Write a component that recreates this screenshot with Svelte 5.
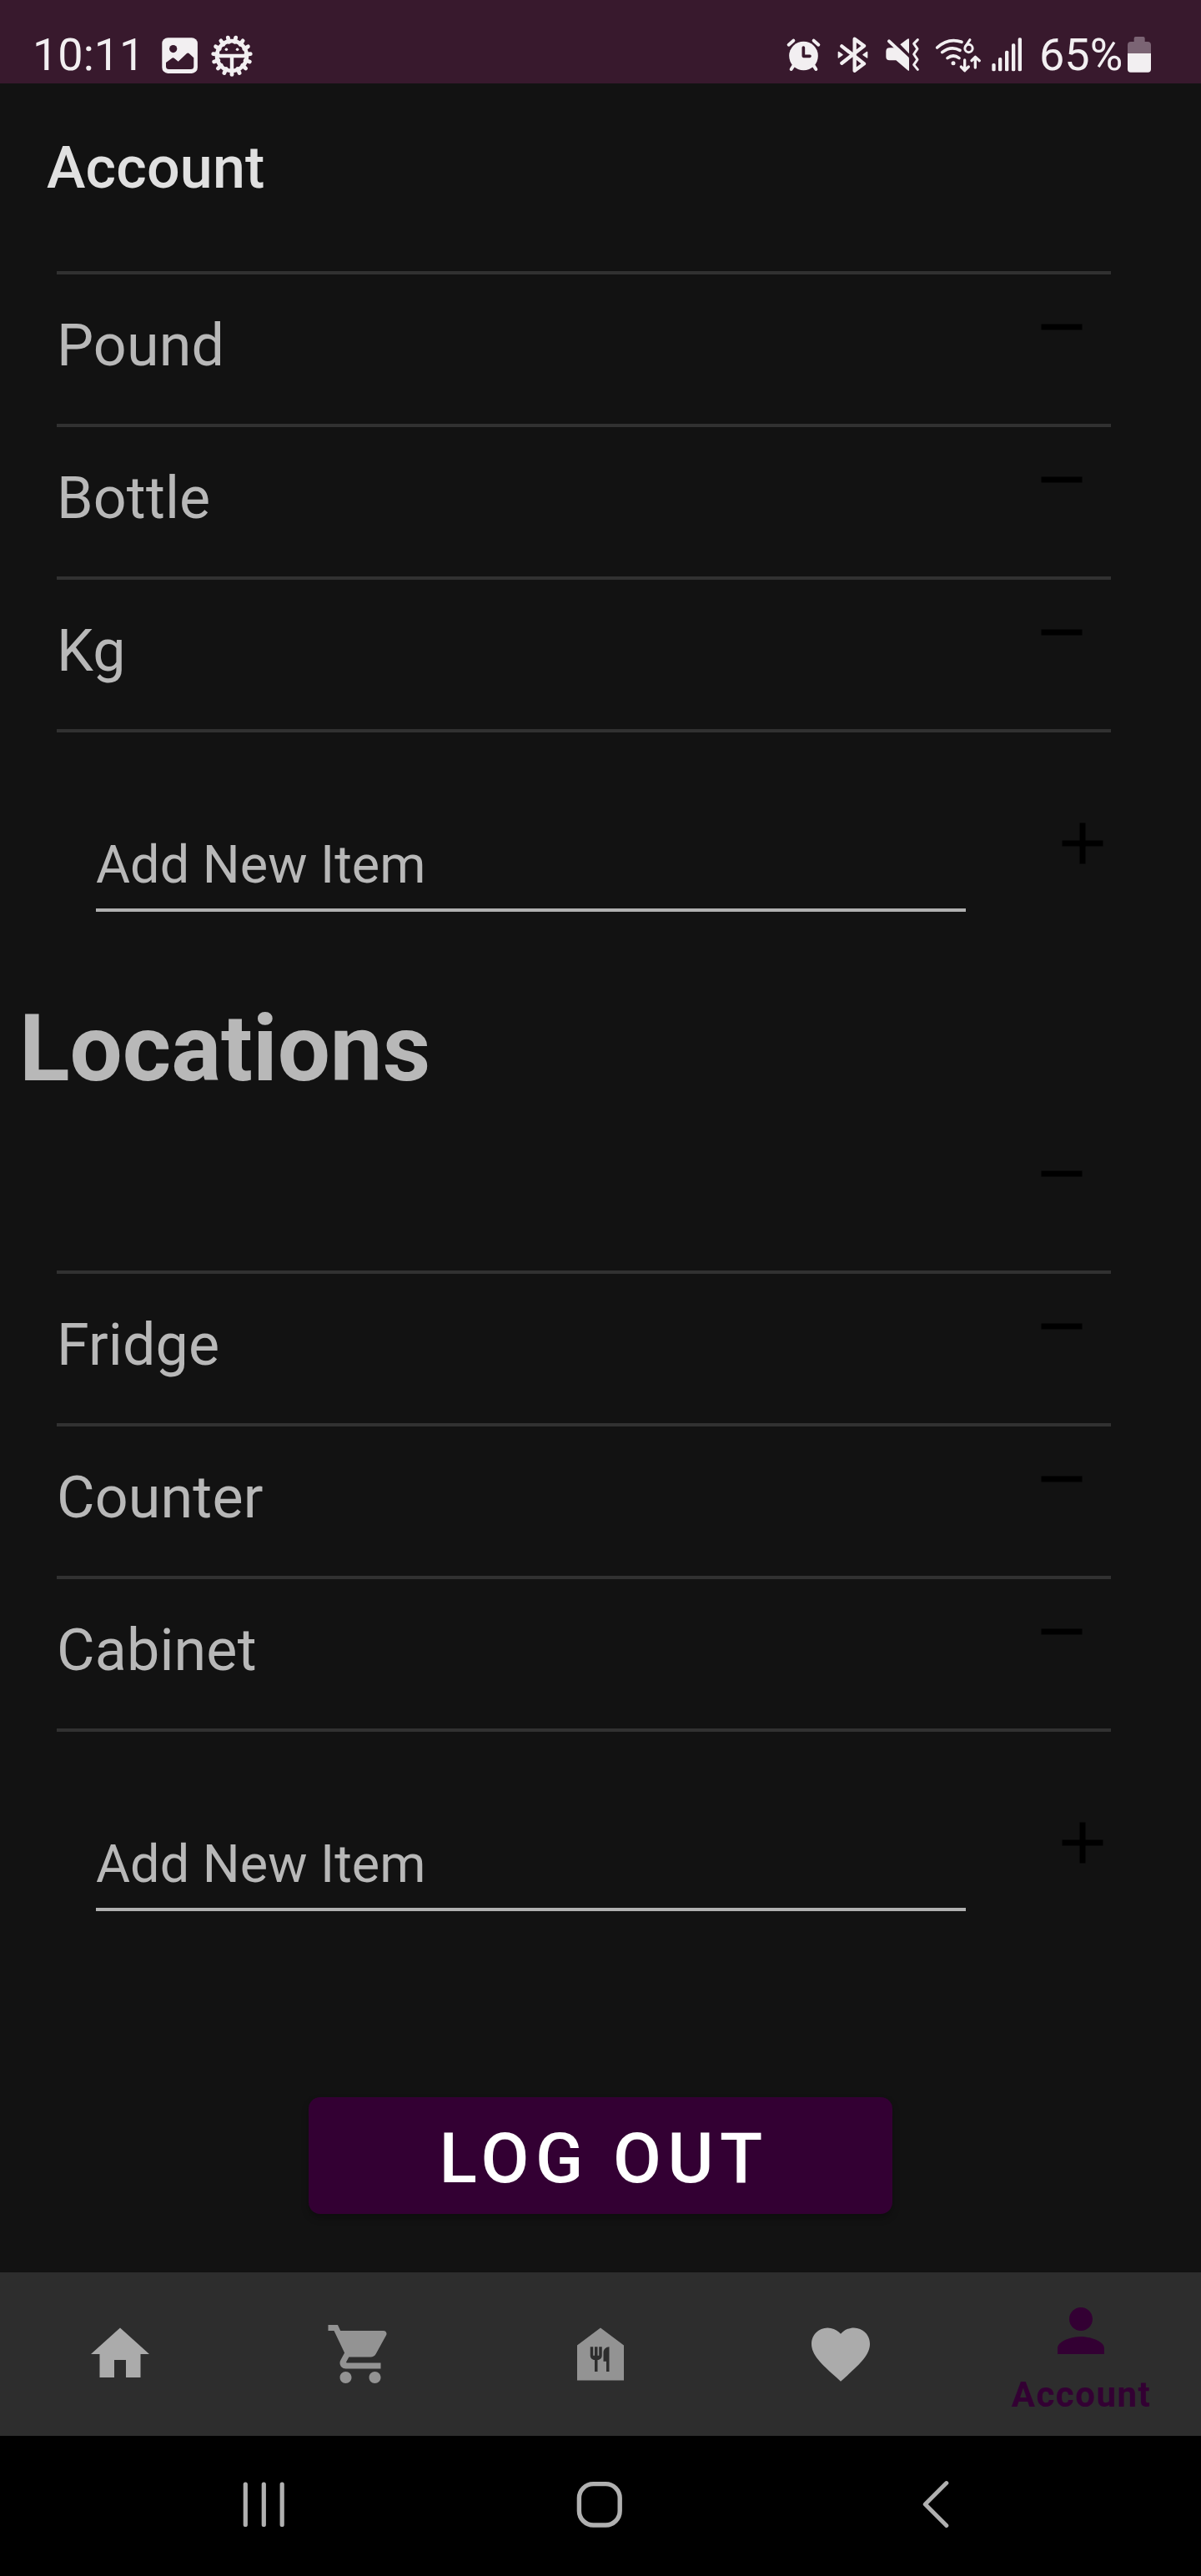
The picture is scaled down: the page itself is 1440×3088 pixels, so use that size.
<script>
  const units = ['Pound', 'Bottle', 'Kg'];
  const locations = ['', 'Fridge', 'Counter', 'Cabinet'];

  const teeth = Array.from({ length: 15 }, (_, i) => 90 + i * 24);
  const bars = [
    { x: 808, y: 228 },
    { x: 831, y: 207 },
    { x: 855, y: 182 },
    { x: 879, y: 157 },
    { x: 902, y: 136 }
  ];

  const tabs = [
    { name: 'Home', tone: 'light', d: 'M10 20v-6h4v6h5v-8h3L12 3 2 12h3v8z' },
    {
      name: 'Shopping',
      tone: 'dim',
      d: 'M7 18c-1.1 0-1.99.9-1.99 2S5.9 22 7 22s2-.9 2-2-.9-2-2-2zM1 2v2h2l3.6 7.59-1.35 2.45c-.16.28-.25.61-.25.96 0 1.1.9 2 2 2h12v-2H7.42c-.14 0-.25-.11-.25-.25l.03-.12.9-1.63h7.45c.75 0 1.41-.41 1.75-1.03l3.58-6.49c.08-.14.12-.31.12-.48 0-.55-.45-1-1-1H5.21l-.94-2H1zm16 16c-1.1 0-1.99.9-1.99 2s.89 2 1.99 2 2-.9 2-2-.9-2-2-2z'
    },
    {
      name: 'Pantry',
      tone: 'dim',
      d: 'M12 3L4 9v12h16V9l-8-6zm.5 9.5c0 .83-.67 1.5-1.5 1.5v4h-1v-4c-.83 0-1.5-.67-1.5-1.5v-3h1v3h.5v-3h1v3h.5v-3h1v3zM15 18h-1v-3.5h-1v-3c0-1.1.9-2 2-2V18z'
    },
    {
      name: 'Favorites',
      tone: 'light',
      d: 'M12 21.35l-1.45-1.32C5.4 15.36 2 12.28 2 8.5 2 5.42 4.42 3 7.5 3c1.74 0 3.41.81 4.5 2.09C13.09 3.81 14.76 3 16.5 3 19.58 3 22 5.42 22 8.5c0 3.78-3.4 6.86-8.55 11.54L12 21.35z'
    },
    {
      name: 'Account',
      tone: 'active',
      d: 'M12 12c2.21 0 4-1.79 4-4s-1.79-4-4-4-4 1.79-4 4 1.79 4 4 4zm0 2c-2.67 0-8 1.34-8 4v2h16v-2c0-2.66-5.33-4-8-4z'
    }
  ];
</script>

{#snippet itemList(items, capped)}
  <ul class="items" class:capped>
    {#each items as item}
      <li>
        <span class="item-name">{item}</span>
        <button class="icon-button" aria-label="Remove">
          <svg viewBox="0 0 24 24"><path d="M19 13H5v-2h14v2z" /></svg>
        </button>
      </li>
    {/each}
  </ul>
{/snippet}

{#snippet addForm()}
  <div class="add-form">
    <input type="text" placeholder="Add New Item" />
    <button class="icon-button" aria-label="Add">
      <svg viewBox="0 0 24 24"><path d="M19 13h-6v6h-2v-6H5v-2h6V5h2v6h6v2z" /></svg>
    </button>
  </div>
{/snippet}

<div class="screen">
  <header class="status">
    <div class="status-group">
      <span class="clock">10:11</span>
      <svg class="picture" width="44" height="44" viewBox="0 0 44 44">
        <rect x="0.3" y="0.3" width="42.6" height="42.6" rx="7" fill="#f2eff1" />
        <circle class="cut" cx="13.7" cy="13.6" r="4.6" />
        <path class="cut" d="M5 30L12.6 24.6Q13.7 23.8 14.8 24.7L19.7 28.7L30 19Q31.3 17.8 32.6 19L38.3 24.2V34.5Q38.3 38 34.8 38H8.5Q5 38 5 34.5Z" />
      </svg>
      <svg class="gear" width="52" height="52" viewBox="-26 -26 52 52">
        {#each teeth as angle}
          <line x1="17" y1="0" x2="22.4" y2="0" transform="rotate({angle})" stroke="#f2eff1" stroke-width="4.8" stroke-linecap="round" />
        {/each}
        <circle r="17.9" fill="none" stroke="#f2eff1" stroke-width="4.8" />
        <path d="M-16 0H16M0 0V16" stroke="#f2eff1" stroke-width="4.4" />
        <circle cx="-6.6" cy="-7.7" r="1.8" fill="#f2eff1" />
        <circle cx="6.6" cy="-7.7" r="1.8" fill="#f2eff1" />
      </svg>
    </div>

    <div class="status-group right">
      <svg width="44" height="46" viewBox="66 126 132 138">
        <circle cx="130.500" cy="201" r="52" fill="#f2eff1" />
        <path class="line" d="M77 161L94 146M167 146L184 161M95 235L86 249M166 235L175 249" stroke-width="12" />
        <path d="M130 171V202H153" fill="none" stroke="#38192d" stroke-width="11" stroke-linecap="round" stroke-linejoin="round" />
      </svg>
      <svg class="bluetooth" width="41" height="46" viewBox="246 126 123 138">
        <path class="line" d="M268 166L348 229L314 254V140L348 165L268 227" stroke-width="13" />
        <path d="M256 187L270 197L256 207ZM359 187L345 197L359 207Z" fill="#f2eff1" stroke="#f2eff1" stroke-width="4" stroke-linejoin="round" />
      </svg>
      <svg class="mute" width="44" height="46" viewBox="420 126 132 138">
        <path class="solid" d="M440 172H458L510 213V254H507L463 217H440Q427 217 427 204V185Q427 172 440 172ZM478 160L504 140Q510 136 510 142V193Z" />
        <path d="M438 148L504 210" class="line" stroke-width="12" />
        <path class="line" d="M541 143L527 157L540 176L527 195L540 214L527 233L541 250" stroke-width="9" />
      </svg>
      <svg class="wifi" width="58" height="46" viewBox="600 126 174 138">
        <path class="line" d="M611 171Q652 134 699 151" stroke-width="11" />
        <path class="line" d="M629 188Q661 163 693 181" stroke-width="11" />
        <path class="line" d="M648 209Q669 193 690 209" stroke-width="11" />
        <circle cx="669" cy="227" r="7.500" fill="#f2eff1" />
        <path class="line" d="M710 216V253M697 240L710 254L724 240M748 243V206M735 218L748 205L763 218" stroke-width="10" />
        <path class="line" d="M729 143L713 167" stroke-width="9" />
        <circle class="line" cx="724.500" cy="174" r="14" stroke-width="9" />
      </svg>
      <svg class="signal" width="38" height="46" viewBox="804 126 114 138">
        {#each bars as bar}
          <rect x={bar.x} y={bar.y} width="13" height={256 - bar.y} rx="5" fill="#f2eff1" />
        {/each}
      </svg>
      <span class="percent">65%</span>
      <svg class="battery" width="30" height="46" viewBox="1293 126 90 138">
        <path d="M1296 192V162Q1296 150 1308 150H1319V138Q1319 132 1325 132H1352Q1358 132 1358 138V150H1368Q1380 150 1380 162V192Z" fill="#7b6474" />
        <path class="solid" d="M1296 192H1380V249Q1380 260 1369 260H1307Q1296 260 1296 249Z" />
      </svg>
    </div>
  </header>

  <div class="toolbar"><h1>Account</h1></div>

  <main>
    {@render itemList(units, true)}
    {@render addForm()}
    <h2>Locations</h2>
    {@render itemList(locations, false)}
    {@render addForm()}
    <button class="logout">LOG OUT</button>
  </main>

  <nav class="tabs">
    {#each tabs as tab}
      <a class={tab.tone} href="#{tab.name}" aria-label={tab.name}>
        <svg viewBox="0 0 24 24"><path d={tab.d} /></svg>
        {#if tab.tone === 'active'}<span>{tab.name}</span>{/if}
      </a>
    {/each}
  </nav>

  <footer class="system">
    <svg width="60" height="60" viewBox="0 0 60 60">
      <path d="M8.300 7V55.500M30.300 7V55.500M52.200 7V55.500" stroke-width="5.200" />
    </svg>
    <svg width="60" height="60" viewBox="0 0 60 60">
      <rect x="4.400" y="6.600" width="48.800" height="49.400" rx="17" stroke-width="5.400" />
    </svg>
    <svg width="60" height="60" viewBox="0 0 60 60">
      <path d="M40.800 5.600L15.300 31L40.800 56.600" stroke-width="5" />
    </svg>
  </footer>
</div>

<style>
  :global(body) {
    margin: 0;
    background: #121212;
  }

  .screen {
    display: flex;
    flex-direction: column;
    width: 1440px;
    height: 3088px;
    overflow: hidden;
    background: #121212;
    color: #b8b8b8;
    font-family: Roboto, 'Liberation Sans', sans-serif;
  }

  svg {
    display: block;
    flex: none;
  }

  h1,
  h2,
  ul {
    margin: 0;
    padding: 0;
  }

  button {
    padding: 0;
    border: 0;
    background: none;
    font-family: inherit;
  }

  .status {
    display: flex;
    justify-content: space-between;
    box-sizing: border-box;
    height: 100px;
    padding: 34px 59px 0 39px;
    background: #38192d;
    color: #f2eff1;
  }

  .status-group {
    display: flex;
    align-items: center;
    height: 62px;
  }

  .clock,
  .percent {
    padding-top: 1px;
    font-size: 54px;
    line-height: 62px;
    white-space: nowrap;
  }

  .clock {
    width: 155px;
  }

  .picture {
    margin-top: 3px;
  }

  .gear {
    margin: 3px 0 0 14px;
  }

  .cut {
    fill: #38192d;
  }

  .solid {
    fill: #f2eff1;
  }

  .line {
    fill: none;
    stroke: #f2eff1;
    stroke-linecap: round;
    stroke-linejoin: round;
  }

  .bluetooth,
  .wifi {
    margin-left: 16px;
  }

  .mute {
    margin-left: 17px;
  }

  .signal {
    margin: 0 20px 0 10px;
  }

  .percent {
    width: 105px;
  }

  .toolbar {
    box-sizing: border-box;
    height: 196px;
    padding: 60px 56px 0;
  }

  h1 {
    color: #e0e0e0;
    font-size: 70px;
    font-weight: 500;
    line-height: 82px;
    letter-spacing: 0.15px;
  }

  main {
    display: flex;
    flex: 1;
    flex-direction: column;
    padding-top: 29px;
  }

  .items {
    margin: 0 108px 0 68px;
    list-style: none;
  }

  .capped {
    border-top: 4px solid #313131;
  }

  .items li {
    display: flex;
    justify-content: space-between;
    align-items: flex-start;
    box-sizing: border-box;
    height: 183px;
    padding: 21px 17px 0 0;
    border-bottom: 4px solid #313131;
  }

  .item-name {
    padding-top: 23px;
    font-size: 70px;
    line-height: 82px;
    letter-spacing: 0.15px;
  }

  .icon-button svg {
    width: 84px;
    height: 84px;
    fill: #000;
  }

  .add-form {
    display: flex;
    justify-content: space-between;
    align-items: flex-start;
    box-sizing: border-box;
    height: 215px;
    padding: 91px 100px 0 115px;
  }

  .add-form input {
    box-sizing: border-box;
    width: 1043px;
    height: 96px;
    margin-top: 28px;
    padding: 2px 0 16px;
    border: 0;
    border-bottom: 4px solid #b0b0b0;
    border-radius: 0;
    outline: 0;
    background: none;
    color: #b8b8b8;
    font-family: inherit;
    font-size: 63px;
    line-height: 74px;
  }

  .add-form input::placeholder {
    color: #b8b8b8;
    opacity: 1;
  }

  h2 {
    margin: 98px 0 21px 23px;
    font-size: 112px;
    font-weight: 700;
    line-height: 132px;
  }

  .logout {
    align-self: center;
    width: 700px;
    height: 140px;
    margin-top: 223px;
    padding: 8px 0 0 8px;
    border-radius: 14px;
    background: #330033;
    box-shadow: 0 5px 8px rgba(0, 0, 0, 0.25);
    color: #fff;
    font-size: 84px;
    font-weight: 500;
    letter-spacing: 7.5px;
    line-height: 98px;
  }

  .tabs {
    display: grid;
    grid-template-columns: repeat(5, 1fr);
    height: 196px;
    background: #2d2d2d;
  }

  .tabs a {
    display: flex;
    flex-direction: column;
    align-items: center;
    padding-top: 56px;
    color: #330033;
    text-decoration: none;
  }

  .tabs svg {
    width: 84px;
    height: 84px;
  }

  .tabs .light {
    fill: #ababab;
  }

  .tabs .dim {
    fill: #939393;
  }

  .tabs .active {
    padding-top: 28px;
    fill: #330033;
  }

  .tabs span {
    margin: 10px 0 0 1px;
    font-size: 42px;
    font-weight: 700;
    letter-spacing: 1.5px;
    line-height: 50px;
  }

  .system {
    display: flex;
    justify-content: space-between;
    align-items: center;
    height: 168px;
    padding: 0 286px;
    background: #000;
  }

  .system svg {
    margin-top: -6px;
    fill: none;
    stroke: #b0b0b0;
    stroke-linecap: round;
    stroke-linejoin: round;
  }
</style>
